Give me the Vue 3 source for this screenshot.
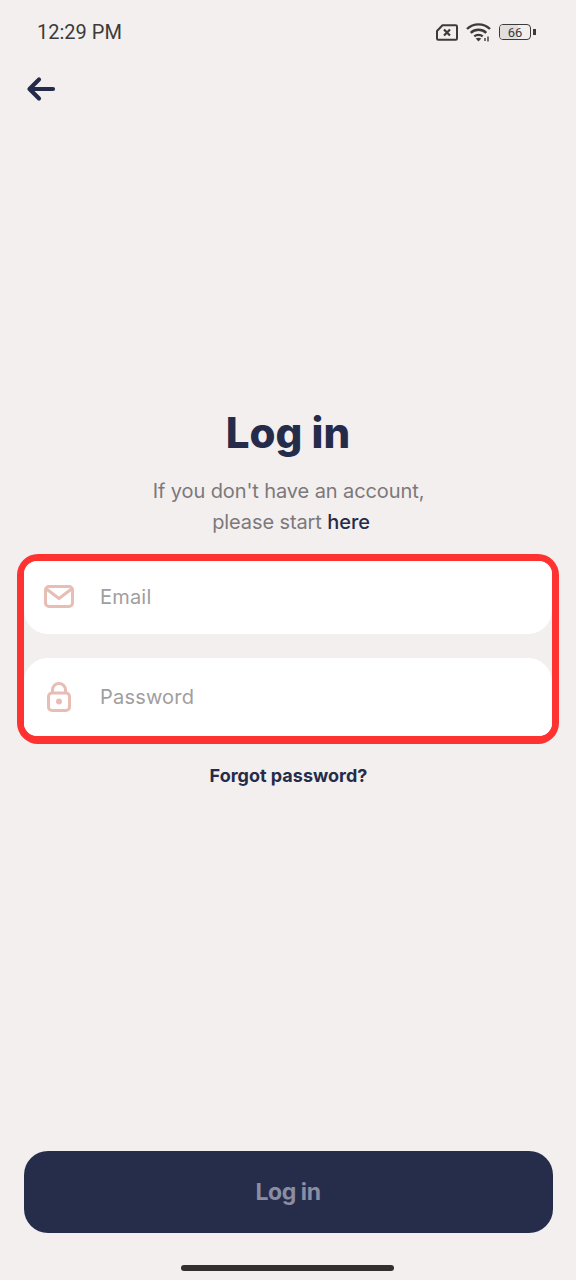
<template>
  <div class="screen">
    <div class="status-bar">
      <span class="time">12:29 PM</span>
      <div class="status-icons">
        <svg class="sim" width="22" height="17" viewBox="0 0 22 17" fill="none">
          <path d="M6.500 1.200H19.700a1.300 1.300 0 0 1 1.300 1.300v12a1.300 1.300 0 0 1-1.300 1.300H2.300A1.300 1.300 0 0 1 1 14.500V7z" stroke="#3d3a3a" stroke-width="2" stroke-linejoin="round" />
          <path d="M8 5.500l6 6M14 5.500l-6 6" stroke="#3d3a3a" stroke-width="2.200" />
        </svg>
        <svg class="wifi" width="25" height="20" viewBox="0 0 25 20" fill="none">
          <path d="M1 7C7.500 .8 17.500 .8 24 7M4.700 10.800C9.200 6.800 15.800 6.800 20.300 10.800M8.300 14.300C10.500 12.400 14.500 12.400 16.700 14.300" stroke="#3d3a3a" stroke-width="2.400" />
          <path d="M12.500 19.500l-2.800-3c1.600-1.100 4-1.100 5.600 0z" fill="#3d3a3a" />
          <path d="M19 16v3M22 14.500v5" stroke="#3d3a3a" stroke-width="1.400" />
        </svg>
        <div class="battery">
          <div class="battery-body">
            <div class="battery-fill" :style="{ width: batteryFill + '%' }"></div>
            <span class="battery-text">{{ battery }}</span>
          </div>
          <div class="battery-tip"></div>
        </div>
      </div>
    </div>

    <button class="back" aria-label="Back">
      <svg width="30" height="26" viewBox="0 0 30 26" fill="none">
        <path d="M27 13H4M13 3.500L3.500 13 13 22.500" stroke="#252c4a" stroke-width="4.200" stroke-linecap="round" stroke-linejoin="round" />
      </svg>
    </button>

    <h1 class="title">Log in</h1>
    <p class="subtitle">
      If you don't have an account,<br />
      <span class="subtitle-second">please start <a class="here">here</a></span>
    </p>

    <div class="fields">
      <label class="field field-top">
        <svg class="field-icon" width="30" height="24" viewBox="0 0 30 24" fill="none">
          <rect x="1.500" y="1.500" width="27" height="20" rx="3.500" stroke="#e8bdb4" stroke-width="3" />
          <path d="M2.500 4l12.500 9.500L27.500 4" stroke="#e8bdb4" stroke-width="3" stroke-linejoin="round" />
        </svg>
        <input type="text" placeholder="Email" />
      </label>
      <label class="field field-bottom">
        <svg class="field-icon" width="30" height="30" viewBox="0 0 30 30" fill="none">
          <rect x="4.500" y="11" width="21" height="17.500" rx="3.500" stroke="#e8bdb4" stroke-width="3" />
          <path d="M8.500 11V8a6.500 6.500 0 0 1 13 0v3" stroke="#e8bdb4" stroke-width="3" />
          <circle cx="15" cy="19.500" r="3" fill="#e8bdb4" />
        </svg>
        <input type="password" placeholder="Password" />
      </label>
    </div>

    <a class="forgot">Forgot password?</a>

    <button class="submit">Log in</button>
    <div class="home-bar"></div>
  </div>
</template>

<script setup>
const battery = 66
const batteryFill = 60
</script>

<style>
html, body {
  margin: 0;
  background: #f3efee;
}
</style>

<style scoped>
.screen {
  width: 576px;
  height: 1280px;
  background: #f3efee;
  display: flex;
  flex-direction: column;
  align-items: center;
  font-family: "Inter", "Open Sans", sans-serif;
  color: #252c4a;
  overflow: hidden;
}

.status-bar {
  width: 100%;
  box-sizing: border-box;
  height: 64px;
  padding: 0 40px 0 37px;
  display: flex;
  align-items: center;
  justify-content: space-between;
}

.time {
  font-family: "Roboto", sans-serif;
  font-size: 20px;
  color: #3d3a3a;
}

.status-icons {
  display: flex;
  align-items: center;
  gap: 8px;
}

.battery {
  display: flex;
  align-items: center;
  gap: 2px;
}

.battery-body {
  position: relative;
  width: 32px;
  height: 16px;
  box-sizing: border-box;
  border: 1.500px solid #3d3a3a;
  border-radius: 4px;
  display: flex;
  align-items: center;
  justify-content: center;
  overflow: hidden;
}

.battery-fill {
  position: absolute;
  left: 0;
  top: 0;
  bottom: 0;
  background: #e2dede;
}

.battery-text {
  position: relative;
  font-family: "Roboto", sans-serif;
  font-size: 13px;
  color: #3d3a3a;
}

.battery-tip {
  width: 3px;
  height: 6px;
  background: #3d3a3a;
}

.back {
  align-self: flex-start;
  margin: 12px 0 0 26px;
  padding: 0;
  border: 0;
  background: none;
  height: 26px;
}

.title {
  margin: 305px 0 0;
  font-size: 42px;
  line-height: 52px;
  font-weight: 800;
  color: #252c4a;
}

.subtitle {
  margin: 17px 0 0 1px;
  font-size: 20px;
  line-height: 31px;
  text-align: center;
  letter-spacing: -0.1px;
  color: #7c787b;
}

.subtitle-second {
  padding-left: 5px;
}

.here {
  font-weight: 500;
  color: #252c4a;
}

.fields {
  width: 542px;
  box-sizing: border-box;
  margin-top: 16px;
  border: 7px solid #ff3232;
  border-bottom-width: 8px;
  border-radius: 21px;
  display: flex;
  flex-direction: column;
  gap: 24px;
}

.field {
  height: 73px;
  background: #fff;
  display: flex;
  align-items: center;
  padding-left: 20px;
  gap: 26px;
}

.field-top {
  padding-bottom: 1px;
  height: 72px;
  border-radius: 13px 13px 24px 24px;
}

.field-bottom {
  height: 78px;
  border-radius: 24px 24px 13px 13px;
}

.field-icon {
  flex: none;
}

input {
  flex: 1;
  min-width: 0;
  border: 0;
  outline: 0;
  background: none;
  padding: 0;
  font-family: inherit;
  font-size: 20px;
  letter-spacing: 0.2px;
}

input::placeholder {
  color: #a09e9e;
  opacity: 1;
}

.forgot {
  margin: 20px 0 0 1px;
  font-size: 18px;
  line-height: 24px;
  font-weight: 700;
  color: #252c4a;
}

.submit {
  margin-top: auto;
  width: 529px;
  height: 82px;
  border: 0;
  border-radius: 24px;
  background: #262d4b;
  color: #8b8ea2;
  font-family: inherit;
  font-size: 23px;
  font-weight: 700;
  letter-spacing: -0.4px;
}

.home-bar {
  width: 213px;
  height: 6px;
  margin: 32px 1px 9px 0;
  border-radius: 3px;
  background: #332f2e;
}
</style>
